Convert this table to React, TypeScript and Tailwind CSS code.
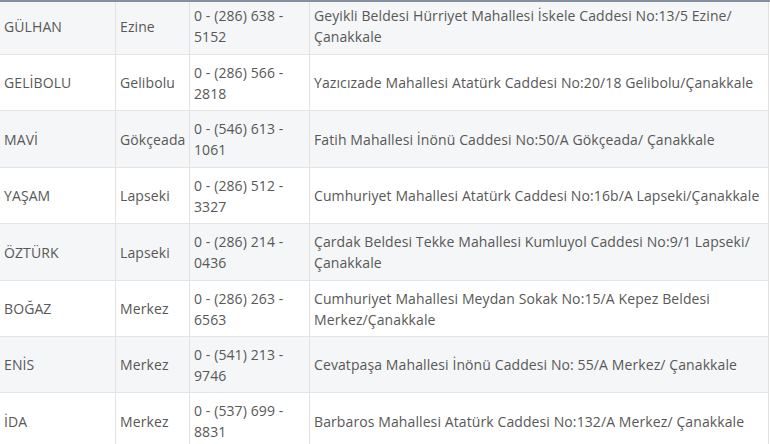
import React from 'react';

interface Pharmacy {
  name: string;
  district: string;
  phone: string[];
  address: string[];
}

const rows: Pharmacy[] = [
  { name: 'GÜLHAN', district: 'Ezine', phone: ['0 - (286) 638 -', '5152'], address: ['Geyikli Beldesi Hürriyet Mahallesi İskele Caddesi No:13/5 Ezine/', 'Çanakkale'] },
  { name: 'GELİBOLU', district: 'Gelibolu', phone: ['0 - (286) 566 -', '2818'], address: ['Yazıcızade Mahallesi Atatürk Caddesi No:20/18 Gelibolu/Çanakkale'] },
  { name: 'MAVİ', district: 'Gökçeada', phone: ['0 - (546) 613 -', '1061'], address: ['Fatih Mahallesi İnönü Caddesi No:50/A Gökçeada/ Çanakkale'] },
  { name: 'YAŞAM', district: 'Lapseki', phone: ['0 - (286) 512 -', '3327'], address: ['Cumhuriyet Mahallesi Atatürk Caddesi No:16b/A Lapseki/Çanakkale'] },
  { name: 'ÖZTÜRK', district: 'Lapseki', phone: ['0 - (286) 214 -', '0436'], address: ['Çardak Beldesi Tekke Mahallesi Kumluyol Caddesi No:9/1 Lapseki/', 'Çanakkale'] },
  { name: 'BOĞAZ', district: 'Merkez', phone: ['0 - (286) 263 -', '6563'], address: ['Cumhuriyet Mahallesi Meydan Sokak No:15/A Kepez Beldesi', 'Merkez/Çanakkale'] },
  { name: 'ENİS', district: 'Merkez', phone: ['0 - (541) 213 -', '9746'], address: ['Cevatpaşa Mahallesi İnönü Caddesi No: 55/A Merkez/ Çanakkale'] },
  { name: 'İDA', district: 'Merkez', phone: ['0 - (537) 699 -', '8831'], address: ['Barbaros Mahallesi Atatürk Caddesi No:132/A Merkez/ Çanakkale'] },
];

const heights = ['h-[52px]', 'h-[56px]', 'h-[57px]', 'h-[56px]', 'h-[57px]', 'h-[56px]', 'h-[56px]', 'h-[57px]'];

const Lines: React.FC<{ lines: string[] }> = ({ lines }) => (
  <div>
    {lines.map((l, i) => (
      <div key={i} className="whitespace-nowrap">{l}</div>
    ))}
  </div>
);

export default function App() {
  return (
    <div className="w-[770px] h-[444px] overflow-hidden bg-white text-[14px] leading-[21px] tracking-[0.1px] text-[#585858]" style={{ fontFamily: '"Open Sans", "Noto Sans", sans-serif' }}>
      <div className="h-[2px] bg-[#848fa0]" />
      <div className="w-[769px] border-r border-[#e2e2e2]">
        {rows.map((r, i) => (
          <div
            key={r.name}
            className={`grid grid-cols-[116px_74px_120px_459px] ${heights[i]} ${i > 0 ? 'border-t border-[#e4e4e4]' : ''} ${i % 2 === 0 ? 'bg-[#f5f6f7]' : 'bg-white'}`}
          >
            <div className={`flex items-center px-1 border-r border-[#e2e2e2] ${i === 0 ? 'pb-[4px]' : ''}`}>{r.name}</div>
            <div className={`flex items-center px-1 border-r border-[#e2e2e2] ${i === 0 ? 'pb-[4px]' : ''}`}>{r.district}</div>
            <div className={`flex items-center px-1 border-r border-[#e2e2e2] ${i === 0 ? 'pb-[4px]' : ''}`}>
              <Lines lines={r.phone} />
            </div>
            <div className={`flex items-center px-1 ${i === 0 ? 'pb-[4px]' : ''}`}>
              <Lines lines={r.address} />
            </div>
          </div>
        ))}
      </div>
    </div>
  );
}
